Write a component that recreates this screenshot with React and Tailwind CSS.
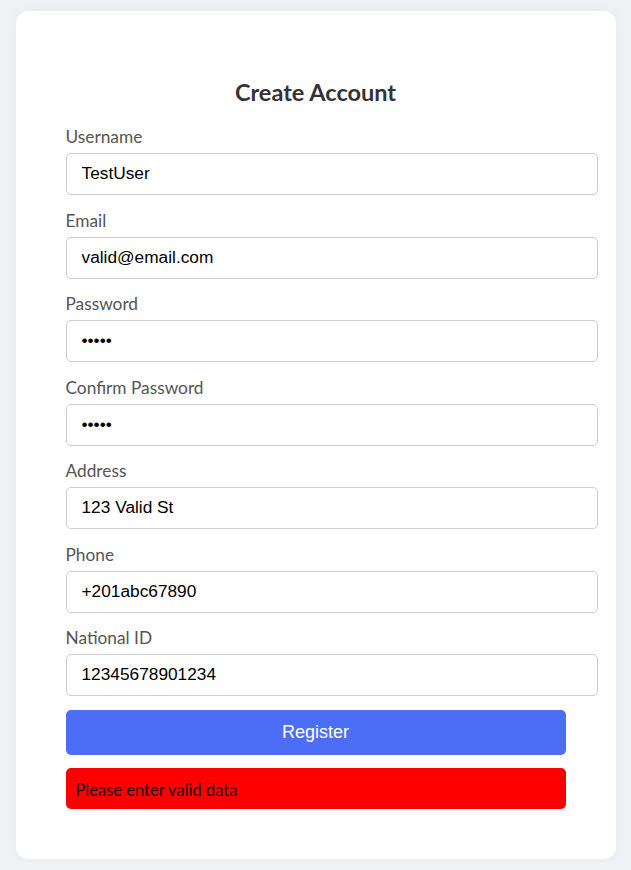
const fields = [
  { label: "Username", type: "text", value: "TestUser" },
  { label: "Email", type: "email", value: "valid@email.com" },
  { label: "Password", type: "password", value: "12345" },
  { label: "Confirm Password", type: "password", value: "12345" },
  { label: "Address", type: "text", value: "123 Valid St" },
  { label: "Phone", type: "text", value: "+201abc67890" },
  { label: "National ID", type: "text", value: "12345678901234" },
];

function App() {
  return (
    <div className="min-h-[870px] bg-[#f0f1f5] pt-[11px] pb-[11px] font-['Lato','Liberation_Sans',sans-serif]">
      <div className="mx-auto w-[600px] rounded-[12px] bg-white px-[50px] pt-[50px] pb-[50px] shadow-[0_0_10px_rgba(0,0,0,0.04)]">
        <h2 className="mt-[17px] mb-[20px] text-center text-[23.5px] leading-[28px] font-bold text-[#333]">
          Create Account
        </h2>

        {fields.map((f) => (
          <div key={f.label} className="mb-[14.5px]">
            <label className="mb-[5px] block text-[17.3px] leading-[22px] text-[#555]">{f.label}</label>
            <input
              type={f.type}
              defaultValue={f.value}
              className="box-content h-[18px] w-[500px] rounded-[5px] border border-[#ccc] px-[15px] py-[11px] font-['Liberation_Sans',Arial,sans-serif] text-[17.3px] text-black outline-none"
            />
          </div>
        ))}

        <button className="mt-[-0.5px] block h-[45px] w-[500px] rounded-[5px] bg-[#4c6ef6] font-['Liberation_Sans',Arial,sans-serif] text-[18px] text-white">
          Register
        </button>

        <div className="mt-[13px] flex h-[41px] w-[500px] items-center rounded-[5px] bg-[#ff0000] px-[10px] pt-[4px] text-[16.5px] text-[#1a0000]">
          Please enter valid data
        </div>
      </div>
    </div>
  );
}

export default App;
